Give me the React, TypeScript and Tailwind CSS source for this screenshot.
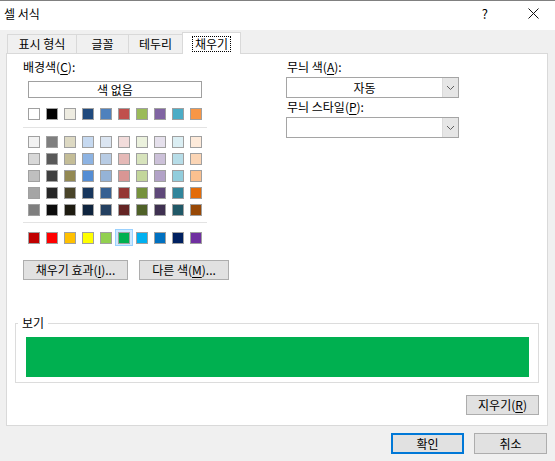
import React from 'react'

const themeRow = ['#ffffff', '#000000', '#eeece1', '#1f497d', '#4f81bd', '#c0504d', '#9bbb59', '#8064a2', '#4bacc6', '#f79646']

const tintRows = [
  ['#f2f2f2', '#7f7f7f', '#ddd9c3', '#c6d9f0', '#dbe5f1', '#f2dcdb', '#ebf1dd', '#e5e0ec', '#dbeef3', '#fdeada'],
  ['#d8d8d8', '#595959', '#c4bd97', '#8db3e2', '#b8cce4', '#e5b9b7', '#d7e3bc', '#ccc1d9', '#b7dde8', '#fbd5b5'],
  ['#bfbfbf', '#3f3f3f', '#938953', '#548dd4', '#95b3d7', '#d99694', '#c3d69b', '#b2a2c7', '#92cddc', '#fac08f'],
  ['#a5a5a5', '#262626', '#494429', '#17365d', '#366092', '#953734', '#76923c', '#5f497a', '#31859b', '#e36c09'],
  ['#7f7f7f', '#0c0c0c', '#1d1b10', '#0f243e', '#244061', '#632423', '#4f6128', '#3f3151', '#205867', '#974806'],
]

const standardRow = ['#c00000', '#ff0000', '#ffc000', '#ffff00', '#92d050', '#00b050', '#00b0f0', '#0070c0', '#002060', '#7030a0']

function Swatch({ color, selected }: { color: string; selected?: boolean }) {
  return (
    <div
      className={
        selected
          ? 'w-[18px] h-[17px] flex justify-center pt-[2px] border border-[#99d1ff] bg-[#cce8ff]'
          : 'w-[18px] h-[17px] flex justify-center pt-[3px]'
      }
    >
      <div className="w-[12px] h-[12px] border border-[#a0a0a0]" style={{ background: color }} />
    </div>
  )
}

function SwatchRow({ colors, selected = -1 }: { colors: string[]; selected?: number }) {
  return (
    <div className="flex ml-[2px]">
      {colors.map((c, i) => (
        <Swatch key={i} color={c} selected={i === selected} />
      ))}
    </div>
  )
}

function Chevron() {
  return (
    <svg width="9" height="6" viewBox="0 0 9 6" fill="none">
      <path d="M1 1l3.5 3.5L8 1" stroke="#606060" strokeWidth="1" />
    </svg>
  )
}

function Select({ value }: { value?: string }) {
  return (
    <div className="flex w-[173px] h-[21px] border border-[#a5a5a5] bg-white">
      <div className="flex-1 flex items-center justify-center leading-none">{value}</div>
      <div className="w-[16px] flex items-center justify-center bg-[#e6e6e6] border-l border-[#dadada]">
        <Chevron />
      </div>
    </div>
  )
}

function Key({ k }: { k: string }) {
  return <span className="underline underline-offset-2">{k}</span>
}

const btn = 'h-[20px] flex items-center justify-center bg-[#e1e1e1] border border-[#adadad] leading-none'

export default function App() {
  return (
    <div className="w-[555px] h-[461px] bg-[#f0f0f0] text-[12px] text-black font-['Noto_Sans_CJK_KR','Noto_Sans',sans-serif] overflow-hidden">
      {/* title bar */}
      <div className="h-[30px] bg-white border-t border-[#808080] flex items-center">
        <span className="ml-[4px] -mt-[4px]">셀 서식</span>
        <span className="ml-auto mr-[40px] -mt-[4px] text-[13px]">?</span>
        <svg className="mr-[16px] -mt-[4px]" width="11" height="11" viewBox="0 0 11 11">
          <path d="M0.5 0.5l10 10M10.5 0.5l-10 10" stroke="#111" strokeWidth="1" />
        </svg>
      </div>

      {/* tabs */}
      <div className="flex items-end h-[23px] ml-[7px] relative z-10">
        <div className="w-[69px] h-[19px] border-t border-l border-[#d9d9d9] flex items-center justify-center">표시 형식</div>
        <div className="w-[52px] h-[19px] border-t border-l border-[#d9d9d9] flex items-center justify-center">글꼴</div>
        <div className="w-[54px] h-[19px] border-t border-l border-[#d9d9d9] flex items-center justify-center">테두리</div>
        <div className="w-[59px] h-[22px] -mb-px bg-white border-t border-l border-r border-[#d9d9d9] flex items-center justify-center">
          <span className="border border-dotted border-black px-[2px] h-[16px] flex items-center leading-none">채우기</span>
        </div>
      </div>

      {/* panel */}
      <div className="ml-[6px] w-[542px] h-[373px] bg-white border border-[#d9d9d9] flex flex-col">
        <div className="flex">
          <div className="w-[279px] pl-[16px] pt-[5px] flex flex-col">
            <div className="h-[16px] leading-[16px]">
              배경색(<Key k="C" />):
            </div>
            <div className="ml-[5px] mt-[6px] w-[174px] h-[17px] border border-[#a0a0a0] flex items-center justify-center leading-none">
              색 없음
            </div>
            <div className="mt-[7px]">
              <SwatchRow colors={themeRow} />
            </div>
            <div className="mt-[5px] w-[184px] h-px bg-[#e3e3e3]" />
            <div className="mt-[5px] flex flex-col">
              {tintRows.map((r, i) => (
                <SwatchRow key={i} colors={r} />
              ))}
            </div>
            <div className="mt-[4px] w-[184px] h-px bg-[#e3e3e3]" />
            <div className="mt-[6px]">
              <SwatchRow colors={standardRow} selected={5} />
            </div>
            <div className="mt-[14px] flex gap-[11px]">
              <div className={`${btn} w-[105px]`}>
                채우기 효과(<Key k="I" />)...
              </div>
              <div className={`${btn} w-[90px]`}>
                다른 색(<Key k="M" />)...
              </div>
            </div>
          </div>

          <div className="pt-[5px] flex flex-col">
            <div className="h-[16px] leading-[16px] ml-[1px]">
              무늬 색(<Key k="A" />):
            </div>
            <div className="mt-[2px]">
              <Select value="자동" />
            </div>
            <div className="mt-[1px] h-[16px] leading-[16px] ml-[1px]">
              무늬 스타일(<Key k="P" />):
            </div>
            <div className="mt-[2px]">
              <Select />
            </div>
          </div>
        </div>

        <fieldset className="mt-[35px] mx-[8px] border border-[#dcdcdc] pb-[5px]">
          <legend className="ml-[2px] px-[4px] h-[16px] leading-[16px]">보기</legend>
          <div className="mt-[6px] ml-[10px] mr-[9px] h-[40px] bg-[#00b050]" />
        </fieldset>

        <div className="mt-[12px] mr-[8px] flex justify-end">
          <div className={`${btn} w-[73px]`}>
            지우기(<Key k="R" />)
          </div>
        </div>
      </div>

      {/* dialog buttons */}
      <div className="mt-[7px] flex justify-end gap-[10px] mr-[8px]">
        <div className="w-[73px] h-[21px] flex items-center justify-center bg-[#e1e1e1] border-2 border-[#0078d7] leading-none">확인</div>
        <div className="w-[73px] h-[21px] flex items-center justify-center bg-[#e1e1e1] border border-[#adadad] leading-none">취소</div>
      </div>
    </div>
  )
}
